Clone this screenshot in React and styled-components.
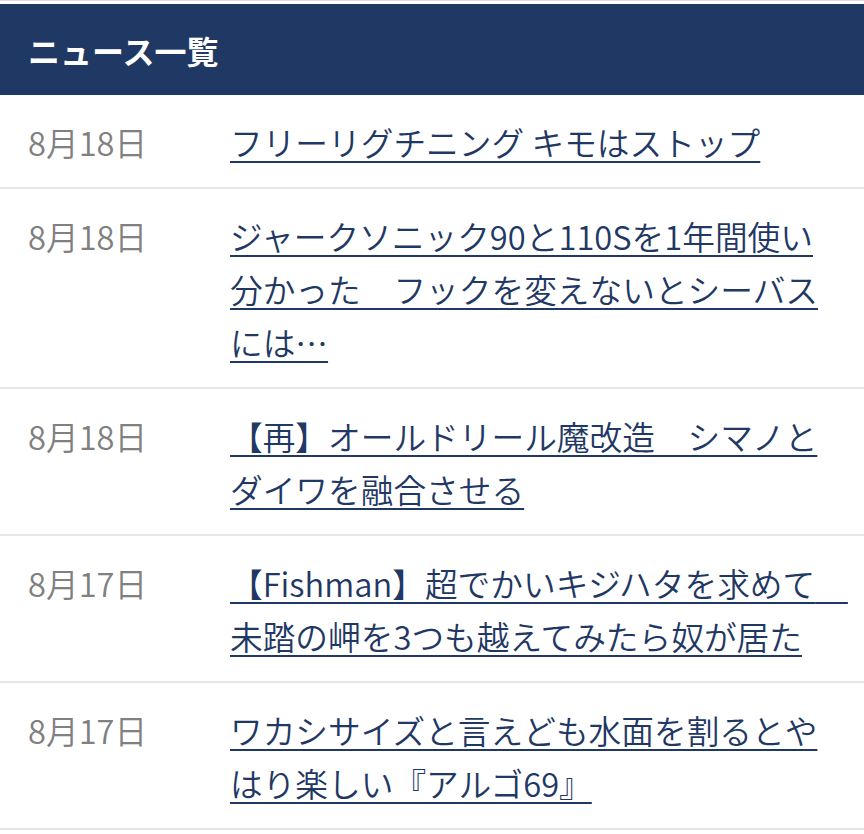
import React from "react";
import styled, { createGlobalStyle } from "styled-components";

const Global = createGlobalStyle`
  html, body { margin: 0; padding: 0; background: #ffffff; }
  body { font-family: "Noto Sans CJK JP", "Noto Sans", sans-serif; }
`;

const Page = styled.div`
  padding-top: 3px;
  background: #ffffff;
  border-top: 1px solid #d9dde5;
`;

const Header = styled.header`
  background: #1f3864;
  height: 91px;
  display: flex;
  align-items: center;
  padding: 0 28px;
`;

const Title = styled.h2`
  margin: 0;
  color: #ffffff;
  font-size: 32px;
  font-weight: 700;
  line-height: 1;
`;

const List = styled.ul`
  list-style: none;
  margin: 0;
  padding: 0;
`;

const Row = styled.li`
  display: grid;
  grid-template-columns: 202px 1fr;
  padding: 19.5px 28px 19.5px 28px;
  border-bottom: 2px solid #e6e6e6;
  font-size: 32.7px;
  font-weight: 350;
  line-height: 53px;
`;

const DateText = styled.span`
  color: #808080;
`;

const Link = styled.a`
  color: #1f3864;
  text-decoration: underline;
  text-decoration-thickness: 2px;
  text-underline-offset: 5px;
`;

const items = [
  { date: "8月18日", title: "フリーリグチニング キモはストップ" },
  { date: "8月18日", title: "ジャークソニック90と110Sを1年間使い分かった　フックを変えないとシーバスには…" },
  { date: "8月18日", title: "【再】オールドリール魔改造　シマノとダイワを融合させる" },
  { date: "8月17日", title: "【Fishman】超でかいキジハタを求めて　未踏の岬を3つも越えてみたら奴が居た" },
  { date: "8月17日", title: "ワカシサイズと言えども水面を割るとやはり楽しい『アルゴ69』" },
];

export default function App() {
  return (
    <Page>
      <Global />
      <Header>
        <Title>ニュース一覧</Title>
      </Header>
      <List>
        {items.map((it, i) => (
          <Row key={i}>
            <DateText>{it.date}</DateText>
            <div>
              <Link href="#">{it.title}</Link>
            </div>
          </Row>
        ))}
      </List>
    </Page>
  );
}
